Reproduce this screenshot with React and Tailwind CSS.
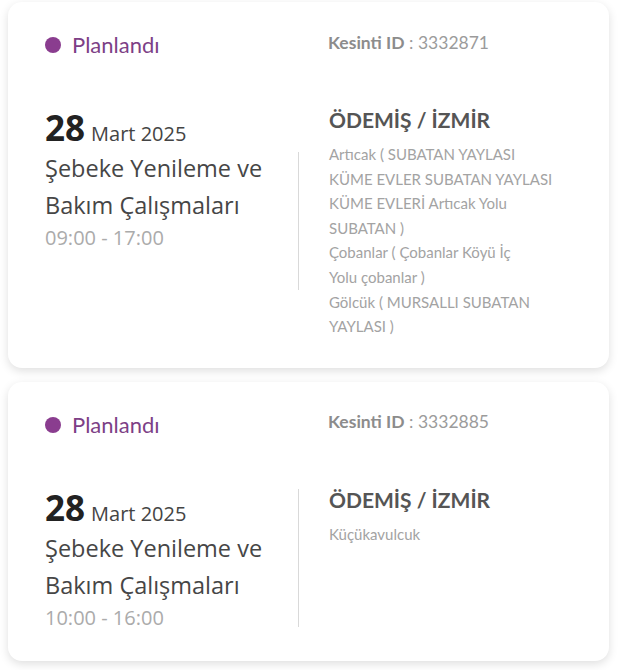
import React from 'react';

const outages = [
  {
    id: '3332871',
    day: '28',
    month: 'Mart 2025',
    title: 'Şebeke Yenileme ve Bakım Çalışmaları',
    time: '09:00 - 17:00',
    place: 'ÖDEMİŞ / İZMİR',
    // lines as they wrap on the card
    areas: [
      'Artıcak ( SUBATAN YAYLASI',
      'KÜME EVLER SUBATAN YAYLASI',
      'KÜME EVLERİ Artıcak Yolu',
      'SUBATAN )',
      'Çobanlar ( Çobanlar Köyü İç',
      'Yolu çobanlar )',
      'Gölcük ( MURSALLI SUBATAN',
      'YAYLASI )',
    ],
  },
  {
    id: '3332885',
    day: '28',
    month: 'Mart 2025',
    title: 'Şebeke Yenileme ve Bakım Çalışmaları',
    time: '10:00 - 16:00',
    place: 'ÖDEMİŞ / İZMİR',
    areas: ['Küçükavulcuk'],
  },
];

const leftFont = { fontFamily: '"Open Sans", "Noto Sans", sans-serif' };
const rightFont = { fontFamily: 'Lato, "Noto Sans", sans-serif' };

function OutageCard({ item }) {
  return (
    <div className="bg-white rounded-[14px] shadow-[0_3px_10px_rgba(0,0,0,0.13)] pl-[37px] pr-6 pt-[28px] pb-[29px]">
      {/* status + id */}
      <div className="flex items-center">
        <div className="w-[283px] flex items-center gap-[11px]" style={rightFont}>
          <span className="w-4 h-4 rounded-full bg-[#8a3d8f]" />
          <span className="text-[22px] text-[#7d3f86] leading-[30px]">Planlandı</span>
        </div>
        <div className="text-[17.5px] leading-[26px] text-[#9b9b9b] -mt-[5px]" style={rightFont}>
          <span className="font-bold text-[#8c8c8c]">Kesinti ID</span> : {item.id}
        </div>
      </div>

      <div className="flex mt-[48px]">
        {/* left column */}
        <div className="w-[253px] shrink-0" style={leftFont}>
          <div className="flex items-baseline gap-[6px]">
            <span className="text-[35px] font-bold text-[#222] leading-[40px]">{item.day}</span>
            <span className="text-[20px] text-[#444]">{item.month}</span>
          </div>
          <div className="text-[23.5px] leading-[37px] text-[#464646] mt-[1px] pr-2">{item.title}</div>
          <div className="text-[20px] leading-[28px] text-[#ababab]">{item.time}</div>
        </div>

        <div className="w-px h-[138px] bg-[#d9d9d9] self-center shrink-0 -mt-[4px]" />

        {/* right column */}
        <div className="pl-[30px] pr-2 w-[270px]" style={rightFont}>
          <div className="text-[21px] font-bold text-[#555] leading-[30px] -mt-[3px]">{item.place}</div>
          <div className="mt-[7px] text-[15px] leading-[24.6px] text-[#a3a3a3]">
            {item.areas.map((a) => (
              <div key={a}>{a}</div>
            ))}
          </div>
        </div>
      </div>
    </div>
  );
}

export default function App() {
  return (
    <div className="bg-white min-h-[670px] pt-[2px] pl-2 w-[621px]">
      <div className="w-[601px] flex flex-col gap-[14px]">
        {outages.map((o) => (
          <OutageCard key={o.id} item={o} />
        ))}
      </div>
    </div>
  );
}
